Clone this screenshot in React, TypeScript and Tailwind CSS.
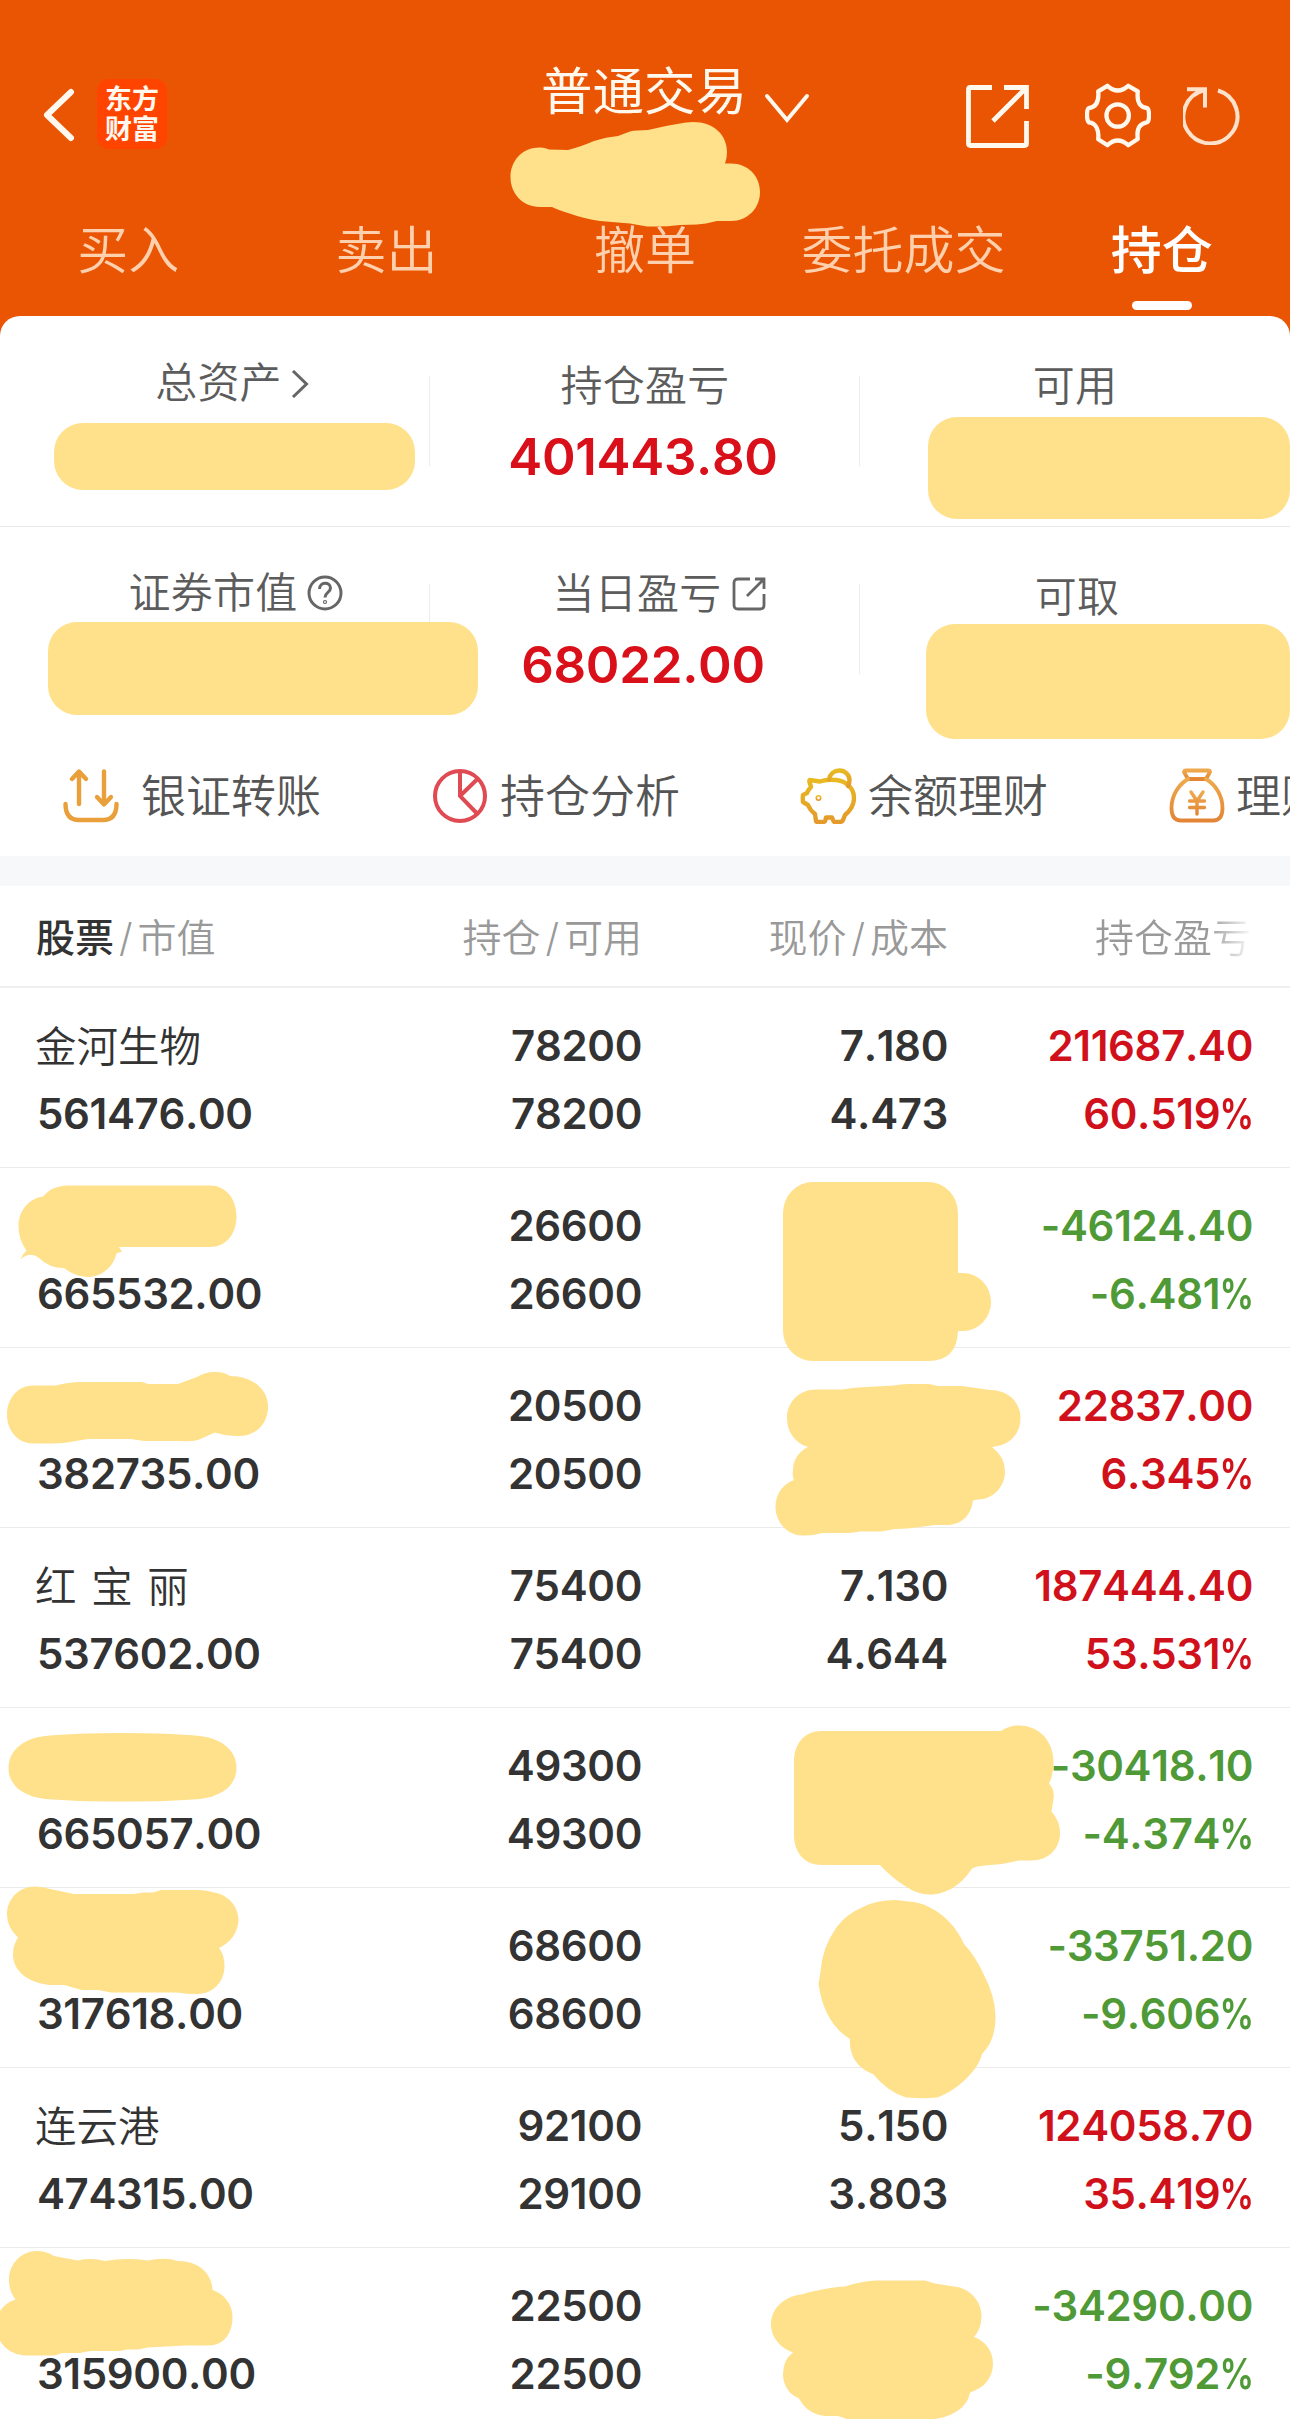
import type { ReactNode } from 'react'

type Holding = {
  name?: string
  marketValue: string
  amount: string
  available: string
  price?: string
  cost?: string
  profit: string
  percent: string
}

const TABS = ['买入', '卖出', '撤单', '委托成交', '持仓']
const ACTIVE_TAB = '持仓'

const HOLDINGS: Holding[] = [
  { name: '金河生物', marketValue: '561476.00', amount: '78200', available: '78200', price: '7.180', cost: '4.473', profit: '211687.40', percent: '60.519' },
  { marketValue: '665532.00', amount: '26600', available: '26600', profit: '-46124.40', percent: '-6.481' },
  { marketValue: '382735.00', amount: '20500', available: '20500', profit: '22837.00', percent: '6.345' },
  { name: '红 宝 丽', marketValue: '537602.00', amount: '75400', available: '75400', price: '7.130', cost: '4.644', profit: '187444.40', percent: '53.531' },
  { marketValue: '665057.00', amount: '49300', available: '49300', profit: '-30418.10', percent: '-4.374' },
  { marketValue: '317618.00', amount: '68600', available: '68600', profit: '-33751.20', percent: '-9.606' },
  { name: '连云港', marketValue: '474315.00', amount: '92100', available: '29100', price: '5.150', cost: '3.803', profit: '124058.70', percent: '35.419' },
  { marketValue: '315900.00', amount: '22500', available: '22500', profit: '-34290.00', percent: '-9.792' },
]

// Brush strokes that hide private values
const MARKS = [
  'M540 147.5 Q545 147.5 549 149.5 L568 150 Q580 147 594 141 Q606 137 618 136 L630 131.5 Q636 130 648 130 Q664 126 680 123.5 Q686 122 693 122 C714 122 727 135 727 152 Q727 158 725 163.5 H731 C748 163.5 760 176 760 192 S748 221 731 221 H717 Q705 224 697 224.5 L680 225 Q665 227 647 226.5 L630 223.5 L600 221 Q585 219 568 213 Q558 210 552 207 H540 C522 207 510.5 193 510.5 177 S522 147.5 540 147.5Z',
  'M66 1185.5 H210 C226 1185.5 236.5 1199 236.5 1216.5 S226 1247 210 1247 H119 L122 1251.5 L116.5 1253.5 C113 1268 101 1277 87 1277 Q74 1276 64 1268 Q49 1268 39 1258 Q30 1251 20.5 1259.5 Q22 1255 26.5 1250.5 Q18.5 1240 18.5 1226 C18.5 1210 30 1198 43 1196.5 Q52 1186 66 1185.5Z',
  'M813 1182 H928 A30 31 0 0 1 958 1213 V1273 H963 A28 29 0 0 1 963 1331 H958 Q957 1361 928 1361 H813 A30 30 0 0 1 783 1331 V1213 A30 31 0 0 1 813 1182Z',
  'M34 1385.5 H56 Q68 1382 82 1382 H142 L148 1384 H178 L197 1377 Q206 1371.5 216 1372 Q224 1372 230 1376 C252 1376 268 1389 268 1406.5 S256 1436 239 1436 Q226 1436 215 1432.5 L198 1440 Q190 1442 180 1441 H144 L131 1439 H88 L70 1442 Q60 1444 34 1443.5 C17 1443.5 7 1430 7 1414.5 S17 1385.5 34 1385.5Z',
  'M816 1389.5 H842 Q855 1387 867 1387 L894 1385.5 Q900 1384 908 1384 H929 L938 1386 H962 L976 1388 L990 1390 C1008 1390 1020.5 1402 1020.5 1418 C1020.5 1434 1010 1445 992 1447 Q1005 1457 1005 1471 C1005 1487 993 1499.5 978 1499.5 L973 1500.5 C971 1516 961 1525 947 1525 H935 L908 1528.5 L895 1529 L881 1531.5 H860 L850 1533 H822 Q812 1536 803 1535.5 C787 1535.5 775.5 1522 775.5 1506.5 C775.5 1494 783 1484 794 1480 Q792 1476 793 1470 C793 1460 799 1451 808 1447 C795 1443 787 1432 787 1418 C787 1402 799 1389.5 816 1389.5Z',
  'M122 1733 Q170 1733 200 1736 C225 1739 236.5 1753 236.5 1768 S225 1796 200 1799 Q170 1801.5 122 1801.5 Q75 1801.5 45 1799 C20 1796 8.5 1783 8.5 1768 S20 1739 45 1736 Q75 1733 122 1733Z',
  'M822 1731 H1001 Q1010 1725 1019 1725.5 C1040 1725.5 1053.5 1742 1053.5 1762 Q1053.5 1774 1049 1783.5 Q1055 1790 1053.5 1799 L1051.5 1811.5 Q1060 1821 1060 1833 C1060 1849 1048 1860.5 1032 1860.5 H1019 L1002 1864 L985 1865.5 Q976 1866 972 1868.5 C962 1884 947 1894.5 930 1894.5 Q918 1895 905 1886 Q892 1878 880 1865 H822 C804 1865 794 1852 794 1835 V1762 C794 1744 804 1731 822 1731Z',
  'M35 1886.5 Q43 1886.5 50 1889 L74 1894 H134 L143 1892.5 H153 L161 1890 H197 Q207 1890 214 1892.5 C229 1895 238.5 1907 238.5 1920.5 Q237 1939 219 1948 Q224.5 1955 224.5 1966 C224.5 1982 213 1994 197 1994 Q187 1994 177 1992.5 H111 L98 1990 L82 1990 L64 1985 H50 C28 1983 13 1971 13 1954.5 Q13 1945 18 1937.5 Q7 1927 7 1914.5 C7 1898 20 1886.5 35 1886.5Z',
  'M896 1900 L908 1901.5 Q920 1902 929 1907 C944 1914 957 1928 964 1944 Q976 1957 984 1975 Q995 1996 995.5 2016 Q996 2040 982 2054 Q980 2062 974 2070 Q960 2088 939 2097 Q932 2099 906 2097.5 Q888 2092 873 2074 C858 2069 849 2056 850 2039 Q824 2023 818.5 1984 L820.5 1972 Q822 1948 836 1928 Q846 1914 863 1907 Q876 1900 896 1900Z',
  'M37 2251 Q46 2251 54 2256 L78 2260.5 Q92 2257.5 105 2261 Q125 2257.5 148 2260.5 Q165 2257 178 2261 C199 2261 212 2274 212.5 2290 C224 2294 232.5 2304 232.5 2317 C232.5 2334 223 2345.5 209 2345.5 H185 L148 2347.5 L138 2349.5 H127 L120 2351 H90 L80 2353 H62 L55 2355.5 H24 Q8 2354 0 2341 V2311 Q5 2303 15.5 2299.5 Q9 2291 9 2280 C9 2263 22 2251 37 2251Z',
  'M838 2287 L845 2286.5 Q862 2281 877 2280.5 H925 L935 2283.5 L960 2287.5 C973 2292 981.5 2303 981.5 2316.5 Q981 2330 974 2337 C986 2341 993 2352 993 2363.5 C993 2378 984 2388 970 2392.5 Q967 2410 943 2417.5 L935 2419 H847 L838 2416 H826 Q808 2415 799 2398.5 C788 2394 783 2384 783 2374 Q783 2360 793 2352.5 C780 2348 771 2337 771 2324.5 C771 2309 783 2297 801 2294.5 Q820 2289 838 2287Z',
]

function ExportIcon() {
  return (
    <svg viewBox="0 0 63 63" className="h-[63px] w-[63px]" fill="none" stroke="currentColor" strokeWidth="4.8" strokeLinejoin="round">
      <path d="M26 2.5H4.5Q2.5 2.5 2.5 4.5V58.5Q2.5 60.5 4.5 60.5H58.5Q60.5 60.5 60.5 58.5V36" />
      <path d="M38 2.5H60.5V24M59 4L27 36" strokeLinejoin="miter" />
    </svg>
  )
}

function GearIcon() {
  return (
    <svg viewBox="0 0 200 196" className="h-[65px] w-[66px]" fill="none" stroke="currentColor" strokeWidth="13" strokeLinejoin="round">
      <path d="M68 8Q99 36 131 8L160 25C156 63 170 74 189 76Q194 78 194 98Q194 118 187 119C165 123 156 141 160 169L131 188Q99 160 68 188L40 170C43 141 33 121 12 119Q6 113 6 98Q6 78 11 76C33 73 43 55 40 25Z" />
      <circle cx="99" cy="98" r="34" />
    </svg>
  )
}

function RefreshIcon() {
  return (
    <svg viewBox="0 0 58 58" className="h-[58px] w-[58px]" fill="none" stroke="currentColor" strokeWidth="4">
      <path d="M35 3.5A27 27 0 1 1 21 3.2" />
      <path d="M4 2.2H22V20.5" />
    </svg>
  )
}

function TransferIcon() {
  return (
    <svg viewBox="0 0 56 54" className="h-[54px] w-[56px]" fill="none" stroke="#e9a03b" strokeWidth="4.4" strokeLinecap="round" strokeLinejoin="round">
      <path d="M16 35V3M9 10L16 2.5L23 10" />
      <path d="M41 2.5V35M34 28L41 35.5L48 28" />
      <path d="M2.5 35C2.5 46 7 51 16 51H40C49 51 53.5 46 53.5 35" />
    </svg>
  )
}

function PieIcon() {
  return (
    <svg viewBox="0 0 56 56" className="h-14 w-14" fill="none" stroke="#e04a52" strokeWidth="4">
      <circle cx="28" cy="28" r="25" />
      <path d="M28 3V28L45.5 46M28 28L46 10.5" />
    </svg>
  )
}

function PiggyIcon() {
  return (
    <svg viewBox="0 0 56 56" className="h-14 w-14" fill="none" stroke="url(#piggy)" strokeWidth="4.4" strokeLinecap="round" strokeLinejoin="round">
      <defs>
        <linearGradient id="piggy" x1="0" y1="0" x2="0" y2="1">
          <stop offset="0" stopColor="#e8b922" />
          <stop offset="1" stopColor="#e59a2b" />
        </linearGradient>
      </defs>
      <path d="M20 13.5L10 12Q9 12 9.5 14L11 19Q8 22 7 25L3 27Q2.5 28 3 34L8 37Q10 42 15 46L16 53Q16 54 18 54H23Q25 54 25.5 52L26 49.5H32L33 52Q33.5 54 35 54H40Q42 54 43 52L45 47C51 42 54 36 54 30C54 20 46 13 36 12Q30 11.5 27 12Q23 12.5 20 13.5Z" />
      <path d="M29 11.5C30 6 34 2.5 39.5 2.5C45 2.5 49.5 7 49.5 12Q49.5 15 48 18" />
      <circle cx="18.5" cy="30" r="0.8" />
    </svg>
  )
}

function MoneyBagIcon() {
  return (
    <svg viewBox="0 0 56 56" className="h-14 w-14" fill="none" stroke="url(#bag)" strokeWidth="3.8" strokeLinecap="round" strokeLinejoin="round">
      <defs>
        <linearGradient id="bag" x1="0" y1="0" x2="0" y2="1">
          <stop offset="0" stopColor="#efa94c" />
          <stop offset="1" stopColor="#e38535" />
        </linearGradient>
      </defs>
      <path d="M19 11L15 4Q15 2.5 17 2.5H39Q41 2.5 41 4L37 11Z" />
      <path d="M19 11C9 17 2.5 28 2.5 40Q2.5 52.5 12 52.5H44Q53.5 52.5 53.5 40C53.5 28 47 17 37 11" />
      <path d="M22 24L28 33L34 24M20.5 33H35.5M20.5 39.5H35.5M28 33V46" strokeWidth="3.4" />
    </svg>
  )
}

function Stat({ label, value, className, labelClass }: { label: ReactNode; value?: string; className?: string; labelClass?: string }) {
  return (
    <div className={`flex w-[430px] flex-col items-center ${className ?? ''}`}>
      <div className={`flex h-[60px] items-center text-[42px] leading-[60px] font-[350] tracking-[0.2px] text-[#5c5c5c] ${labelClass ?? ''}`}>{label}</div>
      {value && <div className="mt-[11px] -ml-1 text-[51px] leading-[60px] font-semibold tracking-[-0.3px] text-[#d90f1a]">{value}</div>}
    </div>
  )
}

function StatDivider() {
  return <div className="-mx-px h-[90px] w-px shrink-0 bg-[#ececec]" />
}

function Action({ icon, label, className }: { icon: ReactNode; label: string; className: string }) {
  return (
    <div className={`flex shrink-0 items-center ${className}`}>
      {icon}
      <span className="pt-[3px] text-[45px] leading-[60px] font-[350] whitespace-nowrap text-[#555]">{label}</span>
    </div>
  )
}

function HoldingRow({ item }: { item: Holding }) {
  const color = item.profit.startsWith('-') ? 'text-[#4f9a37]' : 'text-[#d0111b]'
  return (
    <div className="grid h-[180px] grid-cols-[303px_302px_306px_305px] grid-rows-[68px_68px] border-b border-[#ebebeb] px-[37px] pt-[24px] text-[42px] leading-[68px] font-semibold tracking-[-0.35px] text-[#333]">
      <div className="-ml-[2px] pt-px text-[41.5px] font-[350] tracking-normal [word-spacing:3px] whitespace-pre">{item.name}</div>
      <div className="text-right">{item.amount}</div>
      <div className="text-right">{item.price}</div>
      <div className={`text-right ${color}`}>{item.profit}</div>
      <div>{item.marketValue}</div>
      <div className="text-right">{item.available}</div>
      <div className="text-right">{item.cost}</div>
      <div className={`-mr-px text-right ${color}`}>
        {item.percent}
        <span className="-ml-[8px] inline-block origin-right scale-x-[0.82]">%</span>
      </div>
    </div>
  )
}

export default function App() {
  return (
    <div className="relative h-[2419px] w-[1290px] overflow-hidden bg-[#ea5504] font-[Inter,'Noto_Sans_CJK_SC',sans-serif] [font-kerning:none]">
      <header className="flex h-[316px] flex-col text-[#fff8ee]">
        <div className="flex h-[209px] items-start pt-[61px]">
          <svg viewBox="0 0 32 54" className="mt-[27px] ml-[43px] h-[54px] w-8" fill="none" stroke="currentColor" strokeWidth="6" strokeLinecap="round" strokeLinejoin="round">
            <path d="M28 4L4 27L28 50" />
          </svg>
          <div className="mt-[18px] ml-[22px] flex h-[70px] w-[70px] shrink-0 flex-col items-center justify-center rounded-[12px] bg-[#ff4400] pt-[2px] text-[27px] leading-[30px] font-bold">
            <span>东方</span>
            <span>财富</span>
          </div>
          <div className="ml-[374px] flex">
            <h1 className="text-[51.5px] leading-[60px] font-normal">普通交易</h1>
            <svg viewBox="0 0 46 32" className="mt-[32px] ml-[17px] h-8 w-[46px]" fill="none" stroke="currentColor" strokeWidth="4" strokeLinecap="round">
              <path d="M3 3L23 27L43 3" />
            </svg>
          </div>
          <div className="ml-auto flex items-center pt-[22px] pr-[49px]">
            <div className="pt-0.5"><ExportIcon /></div>
            <div className="ml-[56px]"><GearIcon /></div>
            <div className="ml-8 text-[#ffe2cb]"><RefreshIcon /></div>
          </div>
        </div>
        <nav className="flex">
          {TABS.map((tab) => (
            <div
              key={tab}
              className={`flex flex-1 flex-col items-center text-[51px] leading-[84px] ${
                tab === ACTIVE_TAB ? 'font-medium text-white' : 'pr-[2px] font-[350] text-[#ffd0ae]'
              }`}
            >
              {tab}
              {tab === ACTIVE_TAB && <div className="mt-[8px] h-[9px] w-[60px] rounded-full bg-white" />}
            </div>
          ))}
        </nav>
      </header>

      <main className="rounded-t-[20px] bg-white">
        <section className="flex h-[210px] items-start">
          <Stat
            className="pt-[37px]"
            labelClass="ml-[34px]"
            label={
              <>
                总资产
                <svg viewBox="0 0 18 28" className="mt-0.5 ml-[9px] h-7 w-[18px]" fill="none" stroke="#666" strokeWidth="3">
                  <path d="M2 1L15.5 14L2 27" />
                </svg>
              </>
            }
          />
          <div className="pt-[60px]"><StatDivider /></div>
          <Stat className="pt-[40px]" label="持仓盈亏" value="401443.80" />
          <div className="pt-[60px]"><StatDivider /></div>
          <Stat className="pt-[40px]" label="可用" />
        </section>
        <section className="flex h-[209px] items-start border-t border-[#e9e9e9]">
          <Stat
            className="pt-[36px]"
            labelClass="ml-[46px]"
            label={
              <>
                证券市值
                <svg viewBox="0 0 36 36" className="mr-[4px] ml-[10px] h-9 w-9" fill="none" stroke="#666" strokeWidth="3">
                  <circle cx="18" cy="18" r="16" />
                  <path d="M12.5 14C12.5 6.5 23.5 6.5 23.5 13C23.5 17.5 18 17.5 18 22.5" />
                  <circle cx="18" cy="27" r="0.6" />
                </svg>
              </>
            }
          />
          <div className="pt-[57px]"><StatDivider /></div>
          <Stat
            className="pt-[37px]"
            labelClass="ml-[29px]"
            label={
              <>
                当日盈亏
                <svg viewBox="0 0 34 34" className="ml-[11px] h-[34px] w-[34px]" fill="none" stroke="#666" strokeWidth="2.8">
                  <path d="M18 2H6Q2 2 2 6V28Q2 32 6 32H28Q32 32 32 28V17" />
                  <path d="M23 2H32V12M31.5 2.5L15 19" />
                </svg>
              </>
            }
            value="68022.00"
          />
          <div className="pt-[57px]"><StatDivider /></div>
          <Stat className="pt-[40px] pl-1" label="可取" />
        </section>
        <section className="flex h-[121px] items-center overflow-hidden pl-[63px]">
          <Action className="w-[369px] gap-[22px]" icon={<TransferIcon />} label="银证转账" />
          <Action className="w-[368px] gap-[12px]" icon={<PieIcon />} label="持仓分析" />
          <Action className="w-[369px] gap-[12px]" icon={<PiggyIcon />} label="余额理财" />
          <Action className="gap-[11px]" icon={<MoneyBagIcon />} label="理财" />
        </section>

        <div className="h-[30px] bg-[#f7f8fa]" />

        <section>
          <div className="grid h-[102px] grid-cols-[303px_302px_306px_305px] items-center border-b-2 border-[#efefef] px-[37px] pt-[3px] text-[39px] leading-[60px] font-[350] text-[#999]">
            <div className="-ml-px">
              <span className="font-medium text-[#333]">股票</span>
              <span className="px-[5px]">/</span>市值
            </div>
            <div className="text-right">持仓<span className="px-[5px]">/</span>可用</div>
            <div className="text-right">现价<span className="px-[5px]">/</span>成本</div>
            <div className="bg-linear-to-r from-[#999] from-85% to-white bg-clip-text pr-[2px] text-right text-transparent">持仓盈亏</div>
          </div>
          {HOLDINGS.map((item) => (
            <HoldingRow key={item.marketValue} item={item} />
          ))}
        </section>
      </main>

      <svg viewBox="0 0 1290 2419" className="pointer-events-none absolute inset-0 h-[2419px] w-[1290px]" fill="#ffe08b">
        <rect x="54" y="423" width="361" height="67" rx="29" />
        <rect x="48" y="622" width="430" height="93" rx="29" />
        <rect x="928" y="417" width="362" height="102" rx="29" />
        <rect x="926" y="624" width="364" height="115" rx="29" />
        {MARKS.map((d) => (
          <path key={d} d={d} />
        ))}
      </svg>
    </div>
  )
}
